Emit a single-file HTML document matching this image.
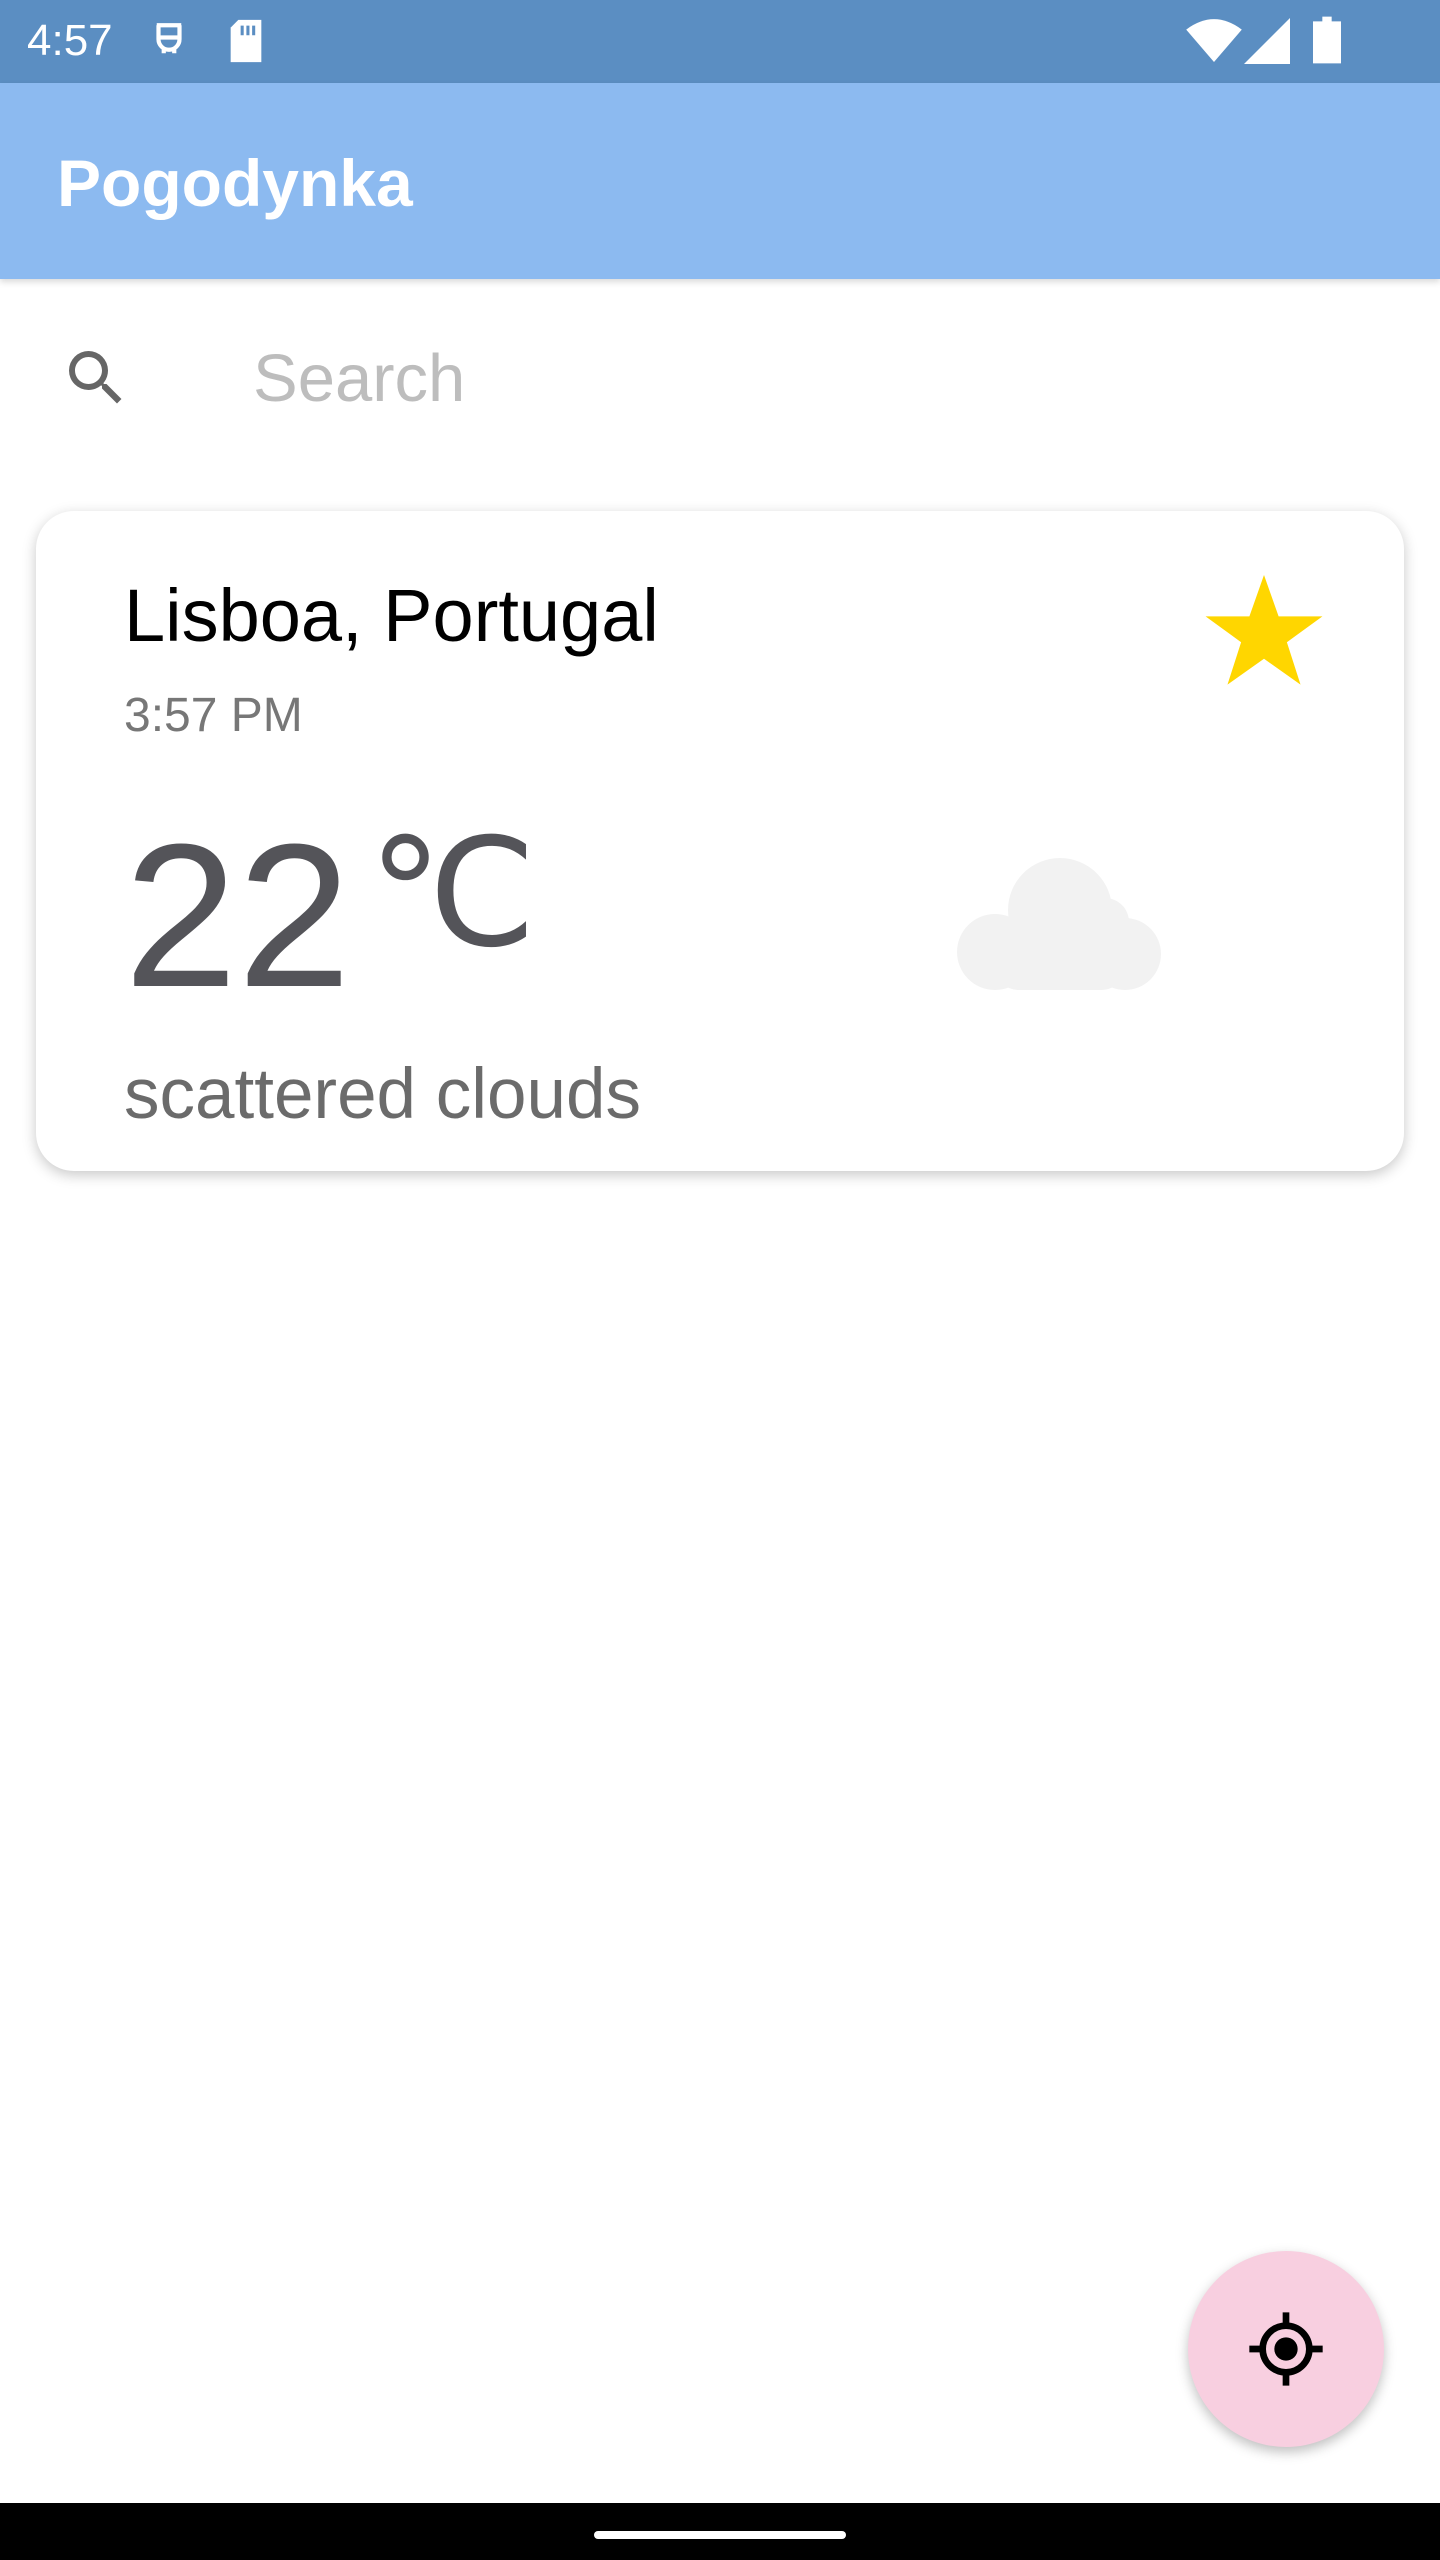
<!DOCTYPE html>
<html><head><meta charset="utf-8"><style>
*{margin:0;padding:0;box-sizing:border-box}
body{width:1440px;height:2560px;background:#fff;font-family:"Liberation Sans",Roboto,sans-serif;position:relative;overflow:hidden}
.abs{position:absolute}
</style></head><body>
<div class="abs" style="left:0;top:0;width:1440px;height:83px;background:#5b8ec2"></div>
<div class="abs" style="left:27px;top:16px;color:#fff;font-size:44px;line-height:50px">4:57</div>
<svg class="abs" style="left:148px;top:18px" width="42" height="46" viewBox="0 0 24 26"><path d="M5 4h14M6 4v8a6 6 0 0 0 12 0V4M5 11h14M9 17v3M15 17v3" stroke="#fff" stroke-width="2.4" fill="none"/></svg>
<svg class="abs" style="left:226px;top:18px" width="40" height="46" viewBox="0 0 20 24"><path d="M6 1h12v22H2V5z" fill="#fff"/><path d="M8 4v5M11 4v5M14 4v5" stroke="#5b8ec2" stroke-width="1.6"/></svg>
<svg class="abs" style="left:1186px;top:18px" width="56" height="44" viewBox="0 0 24 19"><path d="M0 5Q12-4 24 5L12 19z" fill="#fff"/></svg>
<svg class="abs" style="left:1244px;top:18px" width="46" height="46" viewBox="0 0 20 20"><path d="M20 0V20H0z" fill="#fff"/></svg>
<svg class="abs" style="left:1313px;top:16px" width="28" height="48" viewBox="0 0 12 20"><path d="M4 0h4v2h4v18H0V2h4z" fill="#fff"/></svg>
<div class="abs" style="left:0;top:83px;width:1440px;height:196px;background:#8cbaf0;box-shadow:0 3px 6px rgba(0,0,0,.15)"></div>
<div class="abs" style="left:57px;top:145px;color:#fff;font-size:66px;font-weight:bold;line-height:76px">Pogodynka</div>
<svg class="abs" style="left:60px;top:342px" width="72" height="72" viewBox="0 0 24 24"><path fill="#666" d="M15.5 14h-.79l-.28-.27A6.471 6.471 0 0 0 16 9.5 6.5 6.5 0 1 0 9.5 16c1.61 0 3.09-.59 4.23-1.57l.27.28v.79l5 4.99L20.49 19l-4.99-5zm-6 0C7.01 14 5 11.99 5 9.5S7.01 5 9.5 5 14 7.01 14 9.5 11.99 14 9.5 14z"/></svg>
<div class="abs" style="left:253px;top:340px;color:#bdbdbd;font-size:67px;line-height:78px">Search</div>
<div class="abs" style="left:36px;top:511px;width:1368px;height:660px;background:#fff;border-radius:38px;box-shadow:0 4px 14px rgba(0,0,0,.22)"></div>
<div class="abs" style="left:124px;top:572px;color:#000;font-size:74px;line-height:88px">Lisboa, Portugal</div>
<div class="abs" style="left:124px;top:688px;color:#777;font-size:48px;line-height:56px">3:57 PM</div>
<svg class="abs" style="left:1205px;top:575px" width="118" height="112" viewBox="0 0 24 23"><path fill="#ffd600" d="M12 0l3 8.5h9l-7.3 5.3 2.8 8.7L12 17.2 4.5 22.5l2.8-8.7L0 8.5h9z"/></svg>
<div class="abs" style="left:124px;top:814px;color:#545459;font-size:204px;line-height:204px">22</div>
<div class="abs" style="left:368px;top:818px;color:#545459;font-size:150px;line-height:150px">℃</div>
<svg class="abs" style="left:953px;top:858px" width="210" height="132" viewBox="0 0 210 132"><g fill="#f2f2f2"><circle cx="107" cy="52" r="52"/><circle cx="42" cy="94" r="38"/><circle cx="172" cy="96" r="36"/><circle cx="152" cy="64" r="24"/><rect x="40" y="80" width="134" height="52" rx="26"/></g></svg>
<div class="abs" style="left:124px;top:1054px;color:#6b6b6b;font-size:71px;line-height:82px">scattered clouds</div>
<div class="abs" style="left:1188px;top:2251px;width:196px;height:196px;border-radius:50%;background:#f8cfe0;box-shadow:0 5px 12px rgba(0,0,0,.25)"></div>
<svg class="abs" style="left:1246px;top:2309px" width="80" height="80" viewBox="0 0 24 24"><circle cx="12" cy="12" r="7" fill="none" stroke="#000" stroke-width="2"/><circle cx="12" cy="12" r="3.5" fill="#000"/><path d="M12 1v4M12 19v4M1 12h4M19 12h4" stroke="#000" stroke-width="2"/></svg>
<div class="abs" style="left:0;top:2503px;width:1440px;height:57px;background:#000"></div>
<div class="abs" style="left:594px;top:2531px;width:252px;height:8px;border-radius:4px;background:#fff"></div>
</body></html>
